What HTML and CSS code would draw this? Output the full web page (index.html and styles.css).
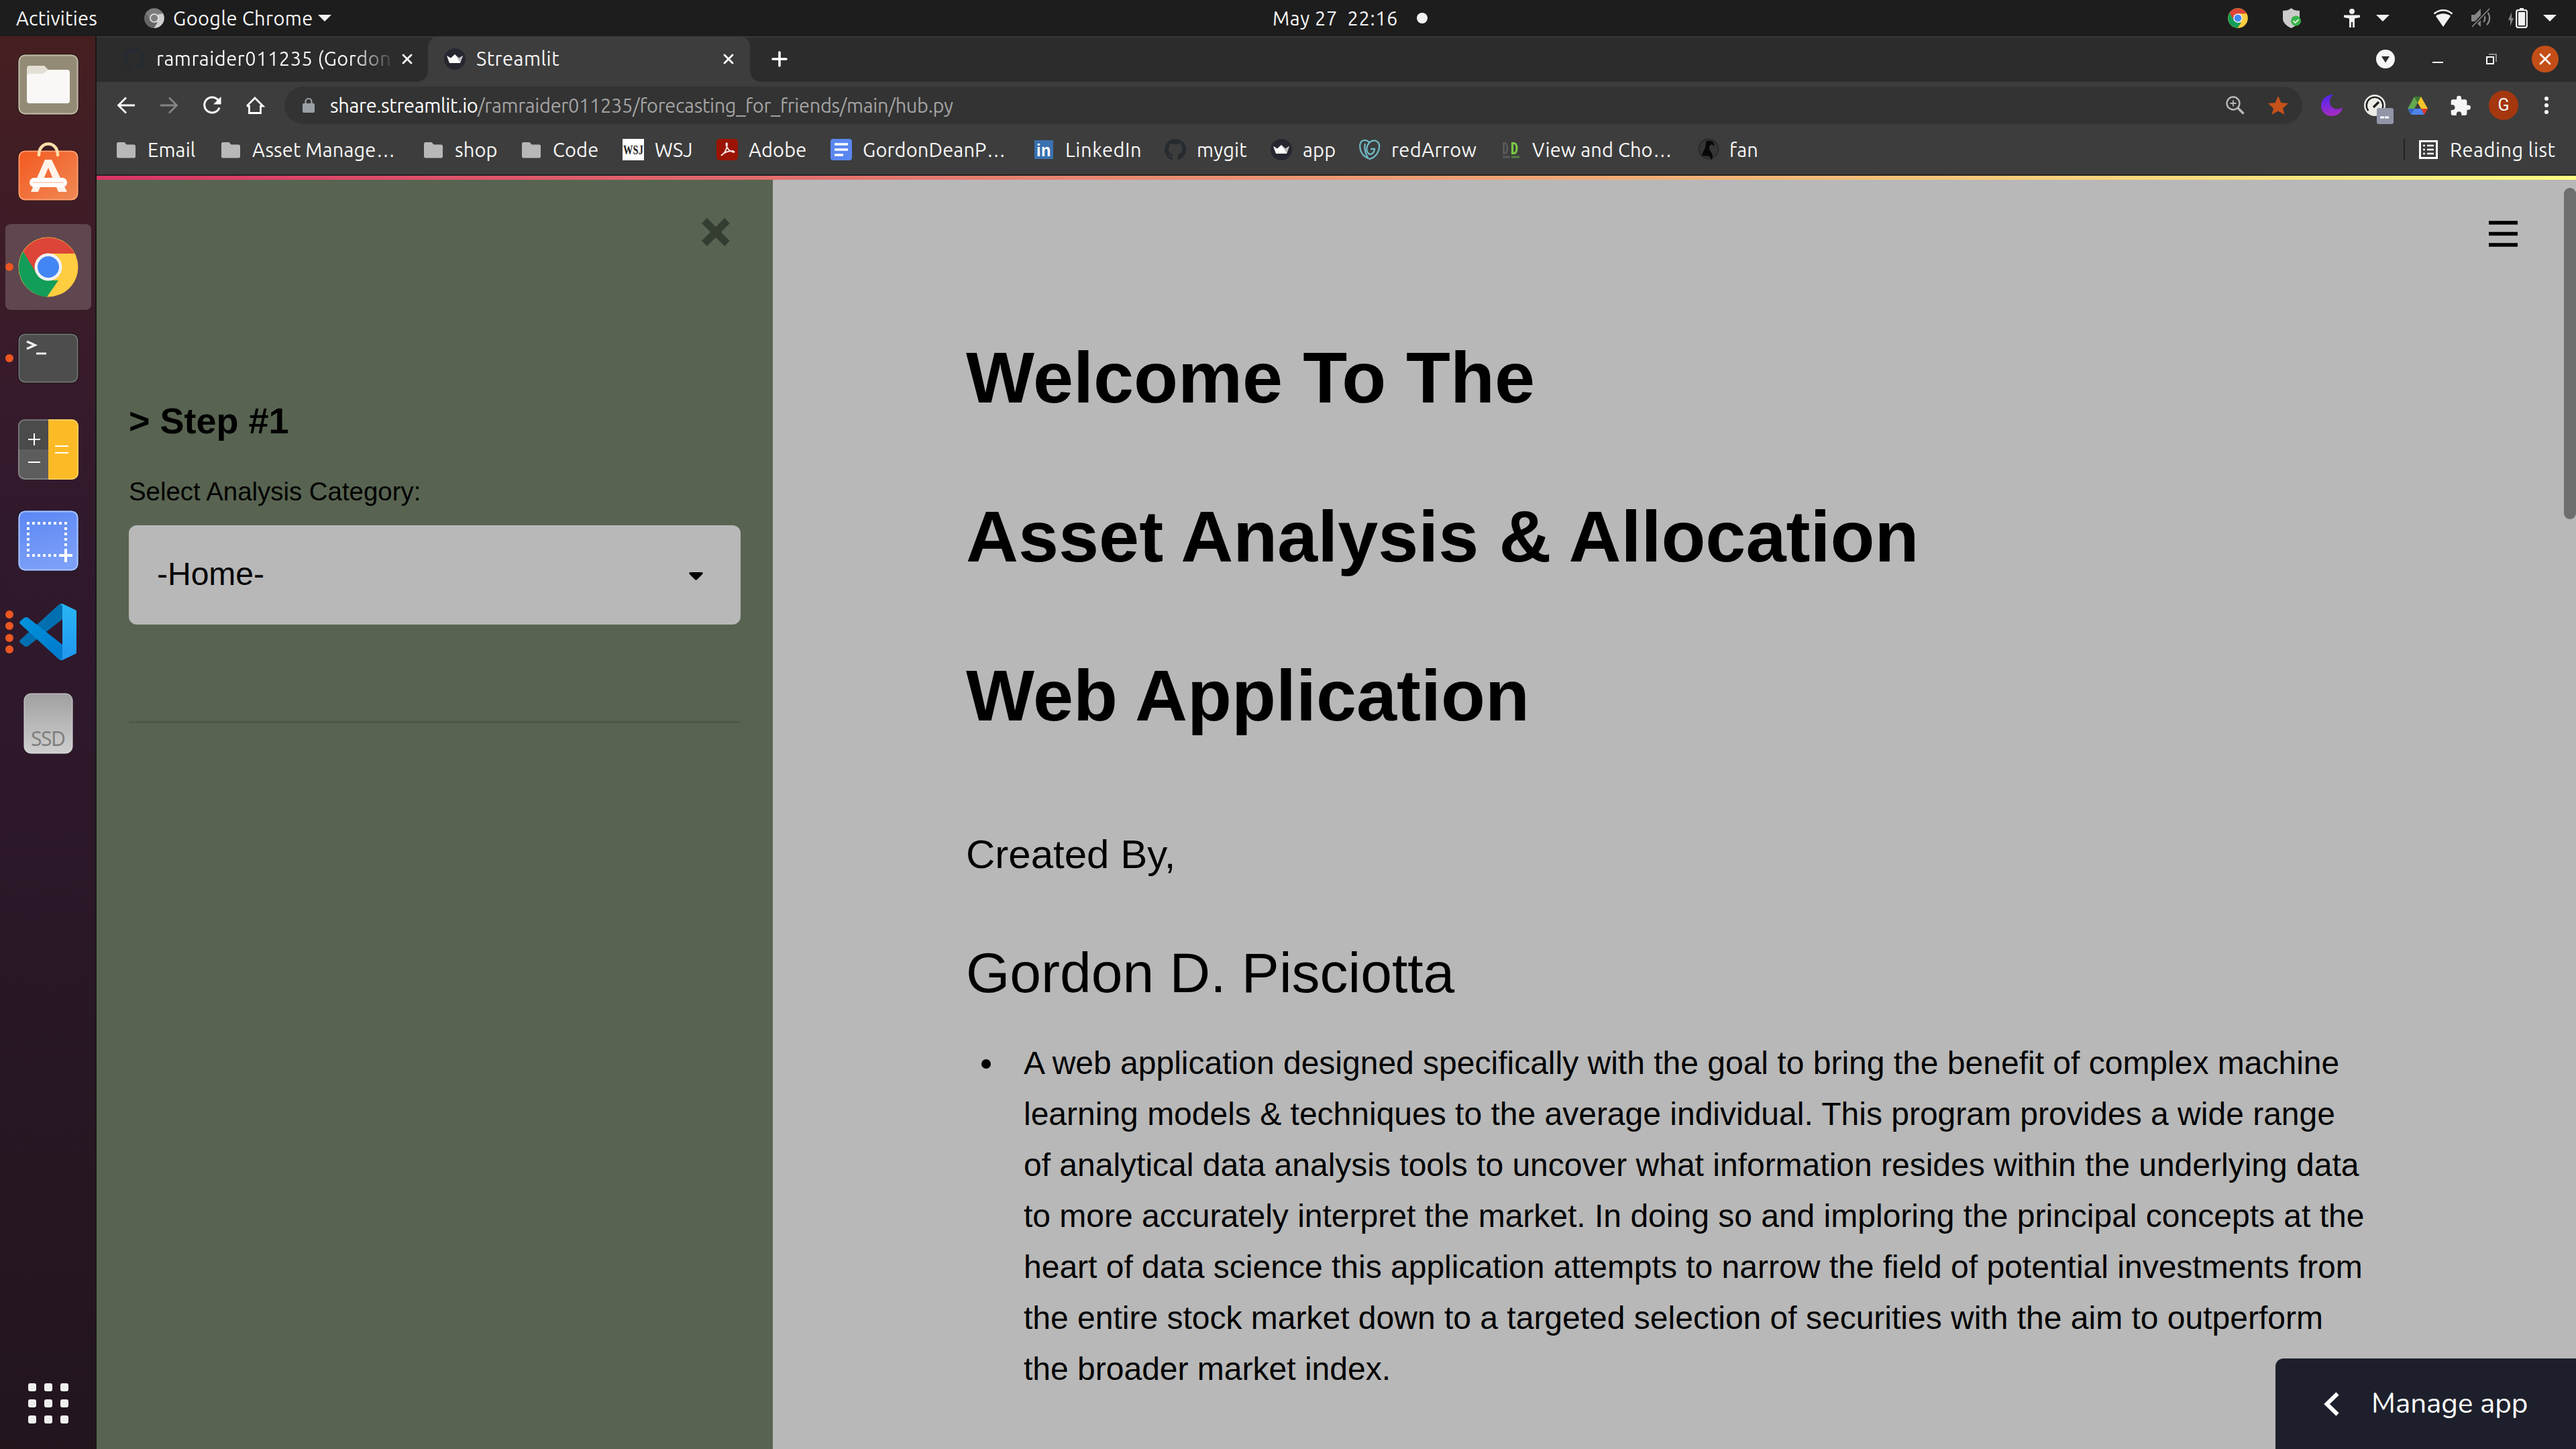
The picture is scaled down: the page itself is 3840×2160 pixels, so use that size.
FILE: index.html
```html
<!DOCTYPE html>
<html lang="en">
<head>
<meta charset="utf-8">
<title>Streamlit</title>
<link rel="stylesheet" href="styles.css">
</head>
<body>
<svg class="defs" width="0" height="0" aria-hidden="true">
  <defs>
    <linearGradient id="moonFill" x1="0" y1="0" x2="0.2" y2="1"><stop offset="0" stop-color="#4a25f0"/><stop offset="1" stop-color="#a42bc4"/></linearGradient>
    <linearGradient id="bagFill" x1="0" y1="0" x2="1" y2="1"><stop offset="0" stop-color="#f4581f"/><stop offset="1" stop-color="#f08a56"/></linearGradient>
    <linearGradient id="ssdFill" x1="0" y1="0" x2="0" y2="1"><stop offset="0" stop-color="#a0a0a0"/><stop offset="1" stop-color="#cfcfcf"/></linearGradient>
    <linearGradient id="shotFill" x1="0" y1="0" x2="0.3" y2="1"><stop offset="0" stop-color="#5a86f4"/><stop offset="1" stop-color="#7c9ff8"/></linearGradient>
    <linearGradient id="codeFill" x1="0" y1="0" x2="0" y2="1"><stop offset="0" stop-color="#29b6f6"/><stop offset="1" stop-color="#2196ee"/></linearGradient>
    <linearGradient id="codeArm" x1="0" y1="0" x2="1" y2="1"><stop offset="0" stop-color="#0094dc"/><stop offset="1" stop-color="#0078cc"/></linearGradient>
  </defs>
  <symbol id="folder" viewBox="0 0 32 32"><path fill="#b8b8b8" d="M4.500 5h9l3 3.500h11a2.500 2.500 0 0 1 2.500 2.500v15a2.500 2.500 0 0 1-2.500 2.500h-23a2.500 2.500 0 0 1-2.500-2.500v-18.500a2.500 2.500 0 0 1 2.500-2.500z"/></symbol>
  <symbol id="github" viewBox="0 0 16 16"><path fill="#262b31" d="M8 0C3.580 0 0 3.580 0 8c0 3.540 2.290 6.530 5.470 7.590.4.070.550-.170.550-.380 0-.190-.010-.820-.010-1.490-2.010.370-2.530-.490-2.690-.940-.090-.230-.480-.940-.820-1.130-.280-.150-.680-.520-.010-.530.630-.010 1.080.580 1.230.820.720 1.210 1.870.870 2.330.660.070-.520.280-.870.510-1.070-1.780-.2-3.640-.890-3.640-3.950 0-.870.310-1.590.820-2.150-.080-.2-.360-1.020.080-2.120 0 0 .670-.210 2.200.820.640-.180 1.320-.270 2-.270.680 0 1.360.090 2 .270 1.530-1.040 2.200-.820 2.200-.820.440 1.100.160 1.920.080 2.120.510.560.820 1.270.820 2.150 0 3.070-1.870 3.750-3.650 3.950.290.250.540.730.540 1.480 0 1.070-.010 1.930-.010 2.200 0 .210.150.460.550.380A8.010 8.010 0 0 0 16 8c0-4.420-3.580-8-8-8z"/></symbol>
  <symbol id="crown" viewBox="0 0 32 32"><circle cx="16" cy="16" r="16" fill="#262730"/><path fill="#fff" d="M4 11l6 3.500 6-5.500 6 5.500 6-3.500-4 11H8z"/><path fill="#bdbdbd" d="M16 9l6 5.500 6-3.500-4 10z"/></symbol>
  <symbol id="chrome" viewBox="0 0 90 90"><circle cx="45" cy="45" r="44.500" fill="#ffcd40"/><path fill="#dd4538" d="M7.500 22a44.500 44.500 0 0 1 77 3H45v20L27 56z"/><path fill="#129d58" d="M7.500 22L27.500 55 45 65h15L43 89.500A44.500 44.500 0 0 1 7.500 22z"/><circle cx="45" cy="45" r="20.500" fill="#f1f1f1"/><circle cx="45" cy="45" r="16" fill="#4286f5"/></symbol>
  <symbol id="caret" viewBox="0 0 20 10"><path fill="#f2f2f2" d="M0 0h20L10 10z"/></symbol>
  <symbol id="cross" viewBox="0 0 16 16"><path d="M2 2l12 12M14 2L2 14" fill="none" stroke="#fff" stroke-width="2.800" stroke-linecap="round"/></symbol>
</svg>

<header class="topbar">
  <span class="activities">Activities</span>
  <svg class="app-icon" width="30" height="30" viewBox="0 0 90 90"><circle cx="45" cy="45" r="44.500" fill="#7c7c7c"/><path fill="#cfcfcf" d="M84.500 25a44.500 44.500 0 0 1-41.500 64.500L62 54V28z"/><path fill="#666" d="M7.500 22L27.500 55 45 65h15L43 89.500A44.500 44.500 0 0 1 7.500 22z"/><circle cx="45" cy="45" r="20.500" fill="#eee"/><circle cx="45" cy="45" r="16" fill="#808080"/></svg>
  <span class="app-name">Google Chrome</span>
  <svg width="20" height="10"><use href="#caret"/></svg>
  <span class="clock">May 27&nbsp; 22:16</span>
  <i class="clock-dot"></i>
  <div class="tray">
    <svg width="30" height="30"><use href="#chrome"/></svg>
    <svg class="t-shield" width="28" height="30" viewBox="0 0 28 30"><path fill="#cbcbcb" d="M12.500 0C16 3 20 4 25 4v12c0 6-6 11-12.500 14C6 27 0 22 0 16V4c5 0 9-1 12.500-4z"/><circle cx="19.500" cy="19" r="7.500" fill="#38b44a"/><path d="M15.500 19l3 3 5-5" fill="none" stroke="#fff" stroke-width="1.600"/></svg>
    <svg class="t-person" width="24" height="28" viewBox="0 0 24 28"><circle cx="12" cy="4" r="4" fill="#f2f2f2"/><path fill="#f2f2f2" d="M0 9.500h24v3.500l-8 1.500V28h-3v-8h-2v8H8V14.500L0 13z"/></svg>
    <svg class="t-caret1" width="20" height="10"><use href="#caret"/></svg>
    <svg class="t-wifi" width="30" height="26" viewBox="0 0 30 26"><path fill="#f2f2f2" d="M15 26L4 10c6-5 16-5 22 0z"/><path d="M1.500 6.500c8-7 19-7 27 0" fill="none" stroke="#f2f2f2" stroke-width="2.600"/></svg>
    <svg class="t-mute" width="28" height="28" viewBox="0 0 28 28"><path fill="#858585" d="M0 9h5l9-9v27l-9-8H0z"/><path d="M18 8c3 3 3 9 0 12M23 4c6 6 5 15 0 20" fill="none" stroke="#858585" stroke-width="2.400"/><path d="M27 0L1 27" stroke="#1d1d1d" stroke-width="5"/><path d="M27 0L1 27" stroke="#858585" stroke-width="1.800"/></svg>
    <svg class="t-batt" width="29" height="30" viewBox="0 0 29 30"><path fill="#858585" d="M5 6L0 18h3l0 9 5-12H5z"/><path fill="#f2f2f2" d="M17 0h6v3h-6z"/><rect x="12.200" y="3.200" width="15.600" height="25.600" rx="2.500" fill="none" stroke="#f2f2f2" stroke-width="2.200"/><rect x="15" y="6" width="10" height="20" fill="#f2f2f2"/></svg>
    <svg class="t-caret2" width="20" height="10"><use href="#caret"/></svg>
  </div>
</header>

<div class="desktop">
  <nav class="dock">
    <svg class="d-files" width="92" height="92" viewBox="0 0 92 92"><rect x="1" y="1" width="90" height="90" rx="10" fill="#948b76" stroke="#1b100f" stroke-width="1"/><rect x="2.500" y="2.500" width="87" height="87" rx="9" fill="none" stroke="#bfb8a6" stroke-width="2"/><path fill="#e3dfd4" d="M18 18h22l8 8v12H14V22a4 4 0 0 1 4-4z"/><path fill="#f9f8f6" d="M14 34a4 4 0 0 1 4-4h20l8-6h28a4 4 0 0 1 4 4v42a4 4 0 0 1-4 4H18a4 4 0 0 1-4-4z"/></svg>
    <svg class="d-soft" width="92" height="88" viewBox="0 0 92 88"><rect x="1" y="12" width="90" height="75" rx="10" fill="url(#bagFill)" stroke="#2a1414"/><rect x="2.500" y="13.500" width="87" height="72" rx="9" fill="none" stroke="#ffa37a" stroke-width="1.500"/><path d="M32 19c0-22 28-22 28 0" fill="none" stroke="#ffdfaa" stroke-width="4.500" stroke-linecap="round"/><path fill="#fff3ea" d="M41 26h10l23 48H61L46 38 31 74H20z"/><rect x="18" y="53" width="56" height="14" rx="7" fill="#fff"/><path d="M23 60h46" stroke="#ffd5c0" stroke-width="2"/></svg>
    <div class="d-active"><i class="run"></i><svg width="90" height="90"><use href="#chrome"/></svg></div>
    <div class="d-row d-term"><i class="run"></i><svg width="92" height="76" viewBox="0 0 92 76"><rect x="1" y="1" width="90" height="74" rx="10" fill="#4d4d4d" stroke="#151015"/><rect x="2.500" y="2.500" width="87" height="71" rx="9" fill="none" stroke="#747474" stroke-width="1.500"/><path d="M14 13l12 5.500L14 24" fill="none" stroke="#eee" stroke-width="3.500"/><path d="M28 31h15" stroke="#eee" stroke-width="3"/></svg></div>
    <svg class="d-calc" width="92" height="92" viewBox="0 0 92 92"><rect x="1" y="1" width="90" height="90" rx="10" fill="#5d5d5d"/><path fill="#4b4b4b" d="M1 46V11A10 10 0 0 1 11 1h35v45z"/><path fill="#fcbb26" d="M46 1h35a10 10 0 0 1 10 10v70a10 10 0 0 1-10 10H46z"/><rect x="2" y="2" width="88" height="88" rx="9" fill="none" stroke="#fff" stroke-opacity=".3" stroke-width="1.500"/><path d="M16 31h18M25 22v18M16 65h18M56 41h20M56 51h20" stroke="#fff" stroke-width="2"/></svg>
    <svg class="d-shot" width="92" height="92" viewBox="0 0 92 92"><rect x="1" y="1" width="90" height="90" rx="10" fill="url(#shotFill)" stroke="#1a1420"/><rect x="2.500" y="2.500" width="87" height="87" rx="9" fill="none" stroke="#a9c1ff" stroke-width="2"/><path d="M14 20h60M14 68h48" stroke="#fff" stroke-width="4" stroke-dasharray="4 4"/><path d="M16 26v42M72 26v30" stroke="#fff" stroke-width="4" stroke-dasharray="4 4"/><path d="M62 68h20M72 58v20" stroke="#fff" stroke-width="4"/></svg>
    <div class="d-row d-code"><div class="runs"><i class="run"></i><i class="run"></i><i class="run"></i><i class="run"></i></div><svg width="84" height="84" viewBox="0 0 84 84"><path fill="#0270b0" d="M0 58a3 3 0 0 1 0-4L58 1a4 4 0 0 1 5 0v22L12 63a5 5 0 0 1-6 0z"/><path fill="url(#codeArm)" d="M0 26a3 3 0 0 0 0 4l58 53a4 4 0 0 0 5 0V61L12 21a5 5 0 0 0-6 0z"/><path fill="url(#codeFill)" d="M60 0h3l19 9a3 3 0 0 1 2 3v60a3 3 0 0 1-2 3l-19 9h-3l3-3V3z"/></svg></div>
    <svg class="d-ssd" width="74" height="91" viewBox="0 0 74 91"><rect x="1" y="1" width="72" height="89" rx="10" fill="url(#ssdFill)" stroke="#d9d9d9"/><text x="37" y="79" text-anchor="middle" textLength="52" class="ssd-label">SSD</text></svg>
    <div class="apps"><i></i><i></i><i></i><i></i><i></i><i></i><i></i><i></i><i></i></div>
  </nav>

  <div class="window">
    <div class="tabs">
      <div class="tab tab-back"><svg width="32" height="32"><use href="#github"/></svg><span class="tab-title faded">ramraider011235 (Gordon</span><svg class="tab-x" width="16" height="16"><use href="#cross"/></svg></div>
      <div class="tab tab-front"><svg width="32" height="32"><use href="#crown"/></svg><span class="tab-title">Streamlit</span><svg class="tab-x" width="16" height="16"><use href="#cross"/></svg></div>
      <svg class="new-tab" width="24" height="24" viewBox="0 0 24 24"><path d="M12 2v20M2 12h20" stroke="#fff" stroke-width="3.600" stroke-linecap="round"/></svg>
      <div class="win-controls">
        <svg width="28" height="28" viewBox="0 0 28 28"><circle cx="14" cy="14" r="14" fill="#f5f5f5"/><path fill="#2c2c2c" d="M8 10h12l-6 9.500z"/></svg>
        <svg class="w-min" width="16" height="16" viewBox="0 0 16 16"><path fill="#fff" d="M0 12h16v2H0z"/></svg>
        <svg class="w-max" width="16" height="16" viewBox="0 0 16 16"><path d="M4 1h11v11" fill="none" stroke="#8b8b8b" stroke-width="2"/><rect x="1" y="5" width="10" height="10" fill="none" stroke="#fff" stroke-width="2"/></svg>
        <svg class="w-close" width="40" height="40" viewBox="0 0 40 40"><circle cx="20" cy="20" r="20" fill="#c34e17"/><path d="M13 13l14 14M27 13L13 27" stroke="#fff" stroke-width="2.800" stroke-linecap="round"/></svg>
      </div>
    </div>

    <div class="toolbar">
      <svg width="28" height="28" viewBox="0 0 28 28"><path d="M27 14H3M14 2.500L2.500 14 14 25.500" fill="none" stroke="#fff" stroke-width="2.800"/></svg>
      <svg width="28" height="28" viewBox="0 0 28 28"><path d="M1 14h24M14 2.500L25.500 14 14 25.500" fill="none" stroke="#858585" stroke-width="2.800"/></svg>
      <svg width="28" height="28" viewBox="0 0 28 28"><path d="M25 17.500A11.500 11.500 0 1 1 23 6" fill="none" stroke="#fff" stroke-width="3"/><path fill="#fff" d="M27.500 1v11.500H16z"/></svg>
      <svg width="28" height="28" viewBox="0 0 28 28"><path d="M5.500 14v11.500h17V14M2 15L14 3l12 12H22M6 15H2" fill="none" stroke="#fff" stroke-width="2.800"/></svg>
      <div class="omnibox">
        <svg width="18" height="22" viewBox="0 0 18 22"><rect x="0" y="8" width="18" height="14" rx="2" fill="#9aa0a6"/><path d="M4.500 9V5.500a4.500 4.500 0 0 1 9 0V9" fill="none" stroke="#9aa0a6" stroke-width="2.200"/></svg>
        <span class="url"><b>share.streamlit.io</b>/ramraider011235/forecasting_for_friends/main/hub.py</span>
        <svg class="o-zoom" width="28" height="28" viewBox="0 0 28 28"><circle cx="11" cy="11" r="9.500" fill="none" stroke="#b9b9b9" stroke-width="2.400"/><path d="M6.500 11h9M11 6.500v9" stroke="#b9b9b9" stroke-width="1.800"/><path d="M18 18l8.500 8.500" stroke="#b9b9b9" stroke-width="3.600"/></svg>
        <svg class="o-star" width="30" height="28" viewBox="0 0 30 28"><path fill="#c6511a" d="M15 0l4.500 10.200L30 11l-8 7.400 2.500 9.600L15 22.500 5.500 28 8 18.400 0 11l10.500-.800z"/></svg>
      </div>
      <svg class="x-moon" width="32" height="32" viewBox="0 0 32 32"><path fill="url(#moonFill)" d="M18.500 0C8 0 0 7 0 16.500S7 32 16 32c8 0 15-5 16-13-9 6-19 1-19-9 0-4 2-8 5.500-10z"/></svg>
      <svg class="x-gauge" width="44" height="32" viewBox="0 0 44 32"><circle cx="16" cy="16" r="16" fill="#ecebe6"/><path d="M6.500 24a12.300 12.300 0 1 1 19 0" fill="none" stroke="#1c1c1c" stroke-width="2.400"/><path d="M14 19l8-8" stroke="#1c1c1c" stroke-width="3.400"/><rect x="19" y="20" width="25" height="24" rx="3" fill="#9295a8"/><path d="M24 34h6M31 34h6" stroke="#fff" stroke-width="3"/></svg>
      <svg class="x-drive" width="30" height="28" viewBox="0 0 30 28"><path fill="#63a84d" d="M10 1l5 9-10 18-5-9z"/><path fill="#3d7a33" d="M10 1h10l-5 9z"/><path fill="#f5c52c" d="M20 1l10 18H20L15 10z"/><path fill="#4f83ee" d="M10 19h10l5 9H5z"/><path fill="#3765cc" d="M0 19h10L5 28z"/><path fill="#d93a2c" d="M20 19h10l-5 9z"/></svg>
      <svg class="x-puzzle" width="30" height="30" viewBox="1.500 0.500 21.500 21.500"><path fill="#f5f5f5" d="M20.500 11H19V7c0-1.100-.9-2-2-2h-4V3.500a2.500 2.500 0 0 0-5 0V5H4c-1.100 0-1.990.9-1.990 2v3.800H3.500c1.490 0 2.700 1.210 2.700 2.700s-1.210 2.700-2.700 2.700H2V20c0 1.100.9 2 2 2h3.800v-1.500c0-1.490 1.210-2.700 2.700-2.700 1.490 0 2.700 1.210 2.700 2.700V22H17c1.100 0 2-.9 2-2v-4h1.500a2.500 2.500 0 0 0 0-5z"/></svg>
      <span class="avatar">G</span>
      <svg class="x-dots" width="6" height="26" viewBox="0 0 6 26"><circle cx="3" cy="3" r="3" fill="#fff"/><circle cx="3" cy="13" r="3" fill="#fff"/><circle cx="3" cy="23" r="3" fill="#fff"/></svg>
    </div>

    <div class="bookmarks">
      <div class="bm bm-email"><svg width="32" height="32"><use href="#folder"/></svg><span>Email</span></div>
      <div class="bm bm-asset"><svg width="32" height="32"><use href="#folder"/></svg><span>Asset Manage<span class="dots">…</span></span></div>
      <div class="bm bm-shop"><svg width="32" height="32"><use href="#folder"/></svg><span>shop</span></div>
      <div class="bm bm-code"><svg width="32" height="32"><use href="#folder"/></svg><span>Code</span></div>
      <div class="bm bm-wsj"><svg width="32" height="32" viewBox="0 0 32 32"><path fill="#fff" d="M0 0h32v32H0z"/><text x="1" y="23" textLength="30" lengthAdjust="spacingAndGlyphs" class="wsj-label">WSJ</text></svg><span>WSJ</span></div>
      <div class="bm bm-adobe"><svg width="32" height="32" viewBox="0 0 32 32"><rect width="32" height="32" rx="5" fill="#9b1403"/><path d="M7 25c4-2 9-9 9-17 0-3-2-2-1.500 1 1 6 6 10 11 11 2 0 1-2-2-2-6 0-12 2-16.500 7z" fill="none" stroke="#f3dedc" stroke-width="1.900"/></svg><span>Adobe</span></div>
      <div class="bm bm-gordon"><svg width="32" height="32" viewBox="0 0 32 32"><rect width="32" height="32" rx="4" fill="#5a87f0"/><path d="M6 8h20M6 16h20M6 24h13" stroke="#fff" stroke-width="3.600"/></svg><span>GordonDeanP<span class="dots">…</span></span></div>
      <div class="bm bm-linkedin"><svg width="32" height="32" viewBox="0 0 32 32"><rect x="2" y="2" width="28" height="28" fill="#3a71b0"/><text x="5" y="26" textLength="22" lengthAdjust="spacingAndGlyphs" class="in-label">in</text></svg><span>LinkedIn</span></div>
      <div class="bm bm-mygit"><svg width="32" height="32"><use href="#github"/></svg><span>mygit</span></div>
      <div class="bm bm-app"><svg width="32" height="32"><use href="#crown"/></svg><span>app</span></div>
      <div class="bm bm-arrow"><svg width="32" height="32" viewBox="0 0 32 32"><path d="M15 6C12 0 3 1 1.500 8 0 17 5 27 16 30c10-3 15-13 14-21C28 1 19 1 15 6M15 6c-6 7-4 15 1 17 5 0 7-5 7-8h-6M9 7c-2 8 0 14 4 21" fill="none" stroke="#6fb9c6" stroke-width="2.300"/></svg><span>redArrow</span></div>
      <div class="bm bm-view"><svg width="32" height="32" viewBox="0 0 32 32"><path d="M5.500 6.500h1.500c5 0 5 15 0 15H5.500z" fill="none" stroke="#5c5c5c" stroke-width="2.600"/><path d="M4 27h11" stroke="#575757" stroke-width="3"/><path d="M18.500 6.500h2c6 0 6 15 0 15h-2z" fill="none" stroke="#7ac943" stroke-width="3.200"/><path d="M17 27h12" stroke="#548040" stroke-width="3"/></svg><span>View and Cho<span class="dots">…</span></span></div>
      <div class="bm bm-fan"><svg width="32" height="32" viewBox="0 0 32 32"><circle cx="17" cy="15" r="14.500" fill="#363636" stroke="#2a2a2a" stroke-width="2"/><path fill="#080808" d="M13 4c8-4 14 2 12 7-2-4-7-3-7 2 0 6 5 7 5 13l-1 6-4-6-11-1c1-6 4-8 5-13z"/></svg><span>fan</span></div>
      <div class="reading"><svg width="28" height="28" viewBox="0 0 28 28"><rect x="1.500" y="1.500" width="25" height="25" fill="none" stroke="#fff" stroke-width="3"/><path d="M6 8h3M6 14h3M6 20h3M12 8h10M12 14h10M12 20h10" stroke="#fff" stroke-width="2.600"/></svg><span>Reading list</span></div>
    </div>

    <div class="rainbow"></div>

    <div class="page">
      <aside class="sidebar">
        <svg class="side-close" width="42" height="42" viewBox="0 0 42 42"><path d="M4 4l34 34M38 4L4 38" stroke="#343d30" stroke-width="11"/></svg>
        <h3 class="step">&gt; Step #1</h3>
        <label class="field-label">Select Analysis Category:</label>
        <div class="select"><span>-Home-</span><svg width="21" height="12" viewBox="0 0 21 12"><path fill="#000" d="M2 0h17q3 1 1 3l-8 8q-1.500 1.500-3 0L1 3Q-1 1 2 0z"/></svg></div>
        <hr class="rule">
      </aside>
      <main class="content">
        <div class="titles">
          <h1>Welcome To The</h1>
          <h1>Asset Analysis &amp; Allocation</h1>
          <h1>Web Application</h1>
        </div>
        <p class="created">Created By,</p>
        <p class="author">Gordon D. Pisciotta</p>
        <ul class="intro">
          <li><span>A web application designed specifically with the goal to bring the benefit of complex machine<br>learning models &amp; techniques to the average individual. This program provides a wide range<br>of analytical data analysis tools to uncover what information resides within the underlying data<br>to more accurately interpret the market. In doing so and imploring the principal concepts at the<br>heart of data science this application attempts to narrow the field of potential investments from<br>the entire stock market down to a targeted selection of securities with the aim to outperform<br>the broader market index.</span></li>
        </ul>
        <svg class="menu" width="43" height="40" viewBox="0 0 43 40"><path d="M0 4h43M0 20.500h43M0 37h43" stroke="#000" stroke-width="5.600"/></svg>
        <div class="scroll-thumb"></div>
        <div class="manage"><svg width="23" height="36" viewBox="0 0 23 36"><path d="M20.500 2.500L4.500 18l16 15.500" fill="none" stroke="#fff" stroke-width="6"/></svg><span>Manage app</span></div>
      </main>
    </div>
  </div>
</div>
</body>
</html>
```
FILE: styles.css
```css
* { box-sizing: border-box; }
body {
  margin: 0;
  width: 3840px;
  height: 2160px;
  overflow: hidden;
  display: flex;
  flex-direction: column;
  background: #1d1d1d;
  color: #f7f7f7;
  font-family: Ubuntu, "Noto Sans", sans-serif;
  font-size: 29px;
  line-height: 40px;
  white-space: nowrap;
}
svg { display: block; flex: none; overflow: visible; }
.defs { position: absolute; }
i { display: block; flex: none; }

/* GNOME top bar */
.topbar { height: 54px; flex: none; display: flex; align-items: center; padding: 0 29px 0 25px; }
.activities { width: 190px; letter-spacing: 0.2px; margin-left: -1px; margin-right: 1px; }
.app-name { width: 229px; padding-left: 13px; letter-spacing: 0.4px; }
.clock { width: 188px; margin-left: 1403px; letter-spacing: 0.6px; }
.clock-dot { width: 16px; height: 16px; border-radius: 50%; background: #f2f2f2; margin-left: 27px; }
.tray { margin-left: auto; display: flex; align-items: center; }
.t-shield { margin-left: 52px; }
.t-person { margin-left: 63px; }
.t-caret1 { margin-left: 24px; }
.t-wifi { margin-left: 65px; }
.t-mute { margin-left: 27px; }
.t-batt { margin-left: 27px; }
.t-caret2 { margin-left: 23px; }

/* Dock */
.desktop { flex: 1; display: flex; min-height: 0; }
.dock {
  width: 144px;
  flex: none;
  display: flex;
  flex-direction: column;
  border-right: 2px solid #1c1719;
  background: linear-gradient(#461f20 0, #3f1d26 220px, #381b2b 480px, #31192c 720px, #2d182a 1100px, #261622 1700px, #22151e 2106px);
}
.d-files { margin: 26px 0 0 26px; }
.d-soft { margin: 40px 0 0 26px; }
.d-active { margin: 34px 0 0 8px; width: 128px; height: 128px; border-radius: 8px; background: #5f464f; display: flex; align-items: center; }
.run { width: 12px; height: 12px; border-radius: 50%; background: #eb5621; }
.d-active svg { margin-left: 7px; }
.d-row { display: flex; align-items: center; padding-left: 8px; }
.d-row svg { margin-left: 6px; }
.d-term { margin-top: 34px; }
.d-calc { margin: 52px 0 0 26px; }
.d-shot { margin: 44px 0 0 26px; }
.d-code { margin-top: 48px; }
.runs { display: flex; flex-direction: column; gap: 5.500px; }
.d-code svg { margin-left: 10px; }
.d-ssd { margin: 49px 0 0 35px; }
.ssd-label { font: 30px "Noto Sans", sans-serif; fill: #808080; }
.apps { margin: auto 0 38px 42px; display: grid; grid-template-columns: repeat(3, 12px); gap: 12px; }
.apps i { height: 12px; border-radius: 3px; background: #efefee; }

/* Browser window */
.window { flex: 1; display: flex; flex-direction: column; min-width: 0; }
.tabs { height: 68px; display: flex; align-items: center; background: #2c2c2c; box-shadow: inset 0 2px #393939; }
.tab { height: 68px; display: flex; align-items: center; }
.tab-title { padding-bottom: 2px; letter-spacing: 0.5px; }
.tab-back { width: 494px; padding-left: 40px; }
.tab-back .tab-title { width: 350px; margin: 0 17px 0 16px; padding-left: 1px; overflow: hidden; }
.faded { -webkit-mask-image: linear-gradient(90deg, #000 295px, transparent 358px); mask-image: linear-gradient(90deg, #000 295px, transparent 358px); }
.tab-front { width: 480px; padding: 0 24px; background: #3d3d3d; border-radius: 16px 16px 0 0; position: relative; }
.tab-front::before, .tab-front::after { content: ""; position: absolute; bottom: 0; width: 16px; height: 16px; }
.tab-front::before { left: -16px; background: radial-gradient(circle at 0 0, transparent 15.500px, #3d3d3d 16px); }
.tab-front::after { right: -16px; background: radial-gradient(circle at 100% 0, transparent 15.500px, #3d3d3d 16px); }
.tab-front .tab-title { margin-left: 16px; }
.tab-front .tab-x { margin-left: auto; }
.new-tab { margin-left: 32px; }
.win-controls { margin-left: auto; padding-right: 26px; display: flex; align-items: center; }
.w-min { margin-left: 56px; }
.w-max { margin-left: 64px; }
.w-close { margin-left: 52px; }

.toolbar { height: 68px; padding: 2px 41px 0 30px; display: flex; align-items: center; background: #3d3d3d; }
.toolbar > svg + svg { margin-left: 36px; }
.omnibox { width: 3008px; height: 56px; margin-left: 30px; padding: 0 21px 0 27px; border-radius: 28px; background: #333; display: flex; align-items: center; }
.url { margin-left: 23px; color: #a3a3a3; letter-spacing: -0.34px; }
.url b { font-weight: 400; color: #fff; }
.o-zoom { margin-left: auto; }
.o-star { margin-left: 35px; }
.toolbar .x-moon { margin-left: 28px; }
.toolbar .x-gauge { margin-left: 32px; }
.toolbar .x-drive { margin-left: 21px; }
.toolbar .x-puzzle { margin-left: 34px; }
.avatar { width: 44px; height: 44px; margin-left: 27px; border-radius: 50%; background: #a5370f; text-align: center; font: 25px/44px Roboto, sans-serif; }
.x-dots { margin-left: 39px; }

.bookmarks { height: 72px; padding: 0 27px 4px 28px; border-bottom: 2px solid #222; display: flex; align-items: center; background: #3d3d3d; letter-spacing: 0.15px; }
.bm { display: flex; align-items: center; gap: 16px; flex: none; }
.dots { font-family: "Liberation Sans", sans-serif; letter-spacing: 0; }
.bm-email { width: 156px; }
.bm-asset { width: 302px; }
.bm-shop { width: 146px; }
.bm-code { width: 152px; }
.bm-wsj { width: 140px; }
.bm-adobe { width: 170px; }
.bm-gordon { width: 302px; }
.bm-linkedin { width: 196px; letter-spacing: 0.6px; }
.bm-mygit { width: 158px; }
.bm-app { width: 132px; }
.bm-arrow { width: 210px; letter-spacing: 0.4px; }
.bm-view { width: 294px; }
.wsj-label { font: bold 18px "Liberation Serif", serif; fill: #222; }
.in-label { font: bold 26px "Liberation Sans", sans-serif; fill: #fff; }
.reading { margin-left: auto; height: 32px; width: 230px; border-left: 2px solid #242424; padding-left: 21px; display: flex; align-items: center; letter-spacing: 0.5px; }
.reading span { margin-left: 18px; }

.rainbow { height: 6px; flex: none; background: linear-gradient(90deg, #da3466, #e77d70 35%, #f4b877 68%, #fffd80); }

/* Streamlit page */
.page { flex: 1; display: flex; min-height: 0; font-family: "Liberation Sans", Arial, sans-serif; color: #000; }
.sidebar { width: 1008px; flex: none; padding: 57px 48px 0; background: #586451; display: flex; flex-direction: column; }
.side-close { align-self: flex-end; margin-right: 16px; }
.step { margin: 227px 0 0; font-size: 54px; line-height: 66px; }
.field-label { margin-top: 44px; font-size: 38.4px; line-height: 58px; }
.select { margin-top: 21px; height: 148px; border-radius: 12px; background: #b8b8b8; padding: 0 56px 3px 42px; display: flex; align-items: center; justify-content: space-between; font-size: 48px; line-height: 76px; }
.select svg { margin-top: 6px; }
.rule { width: 912px; height: 3px; margin: 144px 0 0; border: 0; background: #4d5847; }

.content { flex: 1; position: relative; padding: 230px 0 0 288px; background: #b8b8b8; }
.titles { display: flex; flex-direction: column; gap: 107px; }
.titles h1 { margin: 0; font-size: 108px; line-height: 130px; }
.created { margin: 124px 0 0; font-size: 60px; line-height: 96px; }
.author { margin: 78px 0 0; font-size: 84px; line-height: 100px; }
.intro { margin: 47px 0 0; padding: 0; list-style: none; font-size: 48px; line-height: 76px; }
.intro li { display: flex; }
.intro li::before { content: ""; flex: none; width: 14px; height: 14px; border-radius: 50%; background: #000; margin: 32px 49px 0 23px; }
.menu { position: absolute; top: 60px; right: 87px; }
.scroll-thumb { position: absolute; top: 12px; right: 0; width: 18px; height: 494px; border-radius: 9px; background: #6f6f6f; }
.manage { position: absolute; right: 0; bottom: 0; width: 448px; height: 135px; border-radius: 12px 0 0 0; background: #1d202c; color: #fff; display: flex; align-items: center; padding-left: 72px; font: 42px/50px Nunito, Lato, sans-serif; }
.manage span { margin-left: 48px; }
```
